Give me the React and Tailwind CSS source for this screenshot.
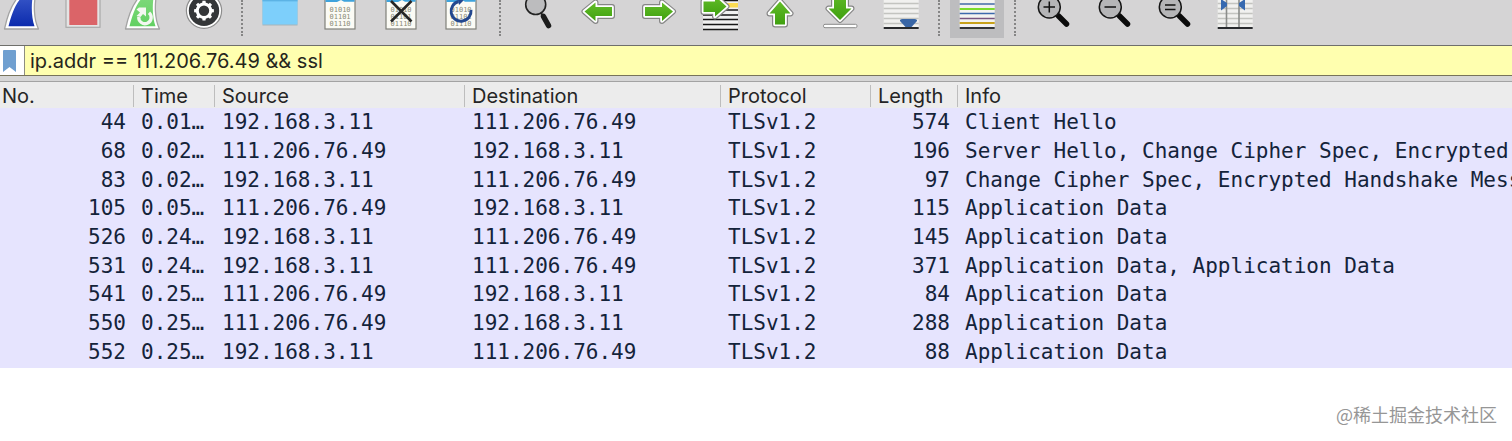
import React from "react";

function Icon({ children }) {
  return (
    <svg viewBox="0 0 54 45" className="h-[45px] w-[54px] shrink-0" aria-hidden="true">
      {children}
    </svg>
  );
}

function Fin({ from, to, id, children }) {
  return (
    <Icon>
      <defs>
        <linearGradient id={id} x1="0" y1="0" x2="0" y2="1">
          <stop offset="0" stopColor={from} />
          <stop offset="1" stopColor={to} />
        </linearGradient>
      </defs>
      <path d="M9.5 29C12 17 17 3 25 -5L41 -8C38.500 4 38.500 19 43.500 29Z" fill="#fff" stroke="#a3a3a3" strokeWidth="1.300" strokeLinejoin="round" />
      <path d="M13.500 26.300C16 16 20 4 27 -3L38 -5C36 5 36.500 18 39.500 26.300Z" fill={`url(#${id})`} />
      {children}
    </Icon>
  );
}

function DataFile({ children }) {
  return (
    <Icon>
      <rect x="12" y="-8" width="30" height="37" fill="#fbfbf5" stroke="#80807a" strokeWidth="1.200" />
      <path d="M12.500 -2H41.500V1.800H31L28 0L24 2H12.500Z" fill="#3fa3dc" />
      <g fill="#8b8b77" fontFamily="'DejaVu Sans Mono', monospace" fontSize="7">
        <text x="16.500" y="11.500">01010</text>
        <text x="16.500" y="18.500">01101</text>
        <text x="16.500" y="25.800">01110</text>
      </g>
      {children}
    </Icon>
  );
}

function GreenArrow({ d }) {
  return (
    <>
      <path d={d} fill="#52b01c" stroke="#858585" strokeWidth="6" strokeLinejoin="round" />
      <path d={d} fill="#52b01c" stroke="#fff" strokeWidth="3.600" strokeLinejoin="round" />
      <path d={d} fill="url(#arrowGreen)" />
    </>
  );
}

function ArrowGradient() {
  return (
    <defs>
      <linearGradient id="arrowGreen" x1="0" y1="0" x2="0" y2="1">
        <stop offset="0" stopColor="#62bd28" />
        <stop offset="1" stopColor="#40a010" />
      </linearGradient>
    </defs>
  );
}

function Magnifier({ sign }) {
  return (
    <Icon>
      <path d="M32.500 16L40.500 24" stroke="#0b0b0b" strokeWidth="5.500" strokeLinecap="round" />
      <circle cx="23.300" cy="7" r="11" fill="#b5b5b7" stroke="#151515" strokeWidth="1.500" />
      <path d={sign} stroke="#111" strokeWidth="1.500" fill="none" />
    </Icon>
  );
}

const teeth = [0, 45, 90, 135, 180, 225, 270, 315];

const groups = [
  [
    { label: "Start capture", icon: <Fin id="finBlue" from="#3857c8" to="#0c2bad" /> },
    {
      label: "Stop capture",
      icon: (
        <Icon>
          <rect x="10" y="-8" width="34" height="35.300" fill="#e4e4e4" stroke="#a9a9a9" strokeWidth="1.200" />
          <rect x="13.300" y="-8" width="28" height="33" fill="#db6468" />
        </Icon>
      ),
    },
    {
      label: "Restart capture",
      icon: (
        <Fin id="finGreen" from="#7fd97c" to="#62d062">
          <path d="M33 12.800A6.200 6.200 0 1 1 22.800 17" fill="none" stroke="#f3f7f0" strokeWidth="3.300" />
          <path d="M20.500 9.500L23 7.500H30V16.500L27 14L24.500 17L20.500 16L24 12.500Z" fill="#f3f7f0" />
        </Fin>
      ),
    },
    {
      label: "Capture options",
      icon: (
        <Icon>
          <circle cx="27" cy="10.700" r="17.600" fill="#fff" stroke="#8d8d8d" strokeWidth="1.200" />
          <circle cx="27" cy="10.700" r="15.200" fill="#343638" />
          <circle cx="27" cy="10.700" r="6.700" fill="none" stroke="#fff" strokeWidth="3" />
          {teeth.map((a) => (
            <path key={a} d="M25 4.500L25.500 0.800H28.500L29 4.500Z" fill="#fff" transform={`rotate(${a} 27 10.700)`} />
          ))}
        </Icon>
      ),
    },
  ],
  [
    {
      label: "Open file",
      icon: (
        <Icon>
          <rect x="9.500" y="0" width="35" height="25.500" fill="#a8b4ba" />
          <rect x="9.500" y="0" width="35" height="24.500" fill="#7dcffb" />
          <rect x="9.500" y="-2" width="35" height="3.400" fill="#5cb3e5" />
        </Icon>
      ),
    },
    { label: "Save file", icon: <DataFile /> },
    {
      label: "Close file",
      icon: (
        <DataFile>
          <path d="M17 1L37.500 21.500M37.500 1L17 21.500" stroke="#262626" strokeWidth="2.600" />
        </DataFile>
      ),
    },
    {
      label: "Reload file",
      icon: (
        <DataFile>
          <path d="M37 10A10 10 0 1 1 24.500 1.500" fill="none" stroke="#23488f" strokeWidth="2.900" />
          <path d="M23.500 -3L29.500 0.500L25 5Z" fill="#23488f" />
        </DataFile>
      ),
    },
  ],
  [
    {
      label: "Find packet",
      icon: (
        <Icon>
          <path d="M30 13L33 17" stroke="#222" strokeWidth="2" />
          <path d="M32.500 16.500L37.500 25.500" stroke="#1c1c1c" strokeWidth="5.500" strokeLinecap="round" />
          <circle cx="24.700" cy="4.500" r="10" fill="#bcbcbe" stroke="#222" strokeWidth="1.600" />
        </Icon>
      ),
    },
    {
      label: "Previous packet",
      icon: (
        <Icon>
          <ArrowGradient />
          <GreenArrow d="M13.500 11.500L24.500 2.500V7H41V16H24.500V21Z" />
        </Icon>
      ),
    },
    {
      label: "Next packet",
      icon: (
        <Icon>
          <GreenArrow d="M41 11.500L30 2.500V7H13V16H30V21Z" />
        </Icon>
      ),
    },
    {
      label: "Go to packet",
      icon: (
        <Icon>
          <rect x="11" y="-4" width="35" height="34" fill="#f1f1f1" />
          <rect x="34" y="3" width="12" height="4.500" fill="#fbdc52" />
          <path d="M11 0.500H46M11 10H46M11 15H46M11 19.500H46M11 24.500H46M11 29.500H46" stroke="#171717" strokeWidth="1.600" />
          <GreenArrow d="M34.500 6.500L23 -4V1.500H11.500V12H23V16.500Z" />
        </Icon>
      ),
    },
    {
      label: "First packet",
      icon: (
        <Icon>
          <GreenArrow d="M27 1.500L37.500 13.500H32V24.500H22V13.500H16.500Z" />
        </Icon>
      ),
    },
    {
      label: "Last packet",
      icon: (
        <Icon>
          <rect x="10.500" y="24.300" width="33.500" height="3.400" rx="1.500" fill="#fff" stroke="#8a8a8a" strokeWidth="1" />
          <GreenArrow d="M27 20L15.500 8.500H21V-8H33V8.500H38.500Z" />
        </Icon>
      ),
    },
    {
      label: "Auto scroll",
      icon: (
        <Icon>
          <rect x="9.700" y="-4" width="35" height="33" fill="#f1f1ef" />
          <path d="M9.700 3.500H44.700M9.700 8.500H44.700M9.700 13.500H44.700M9.700 18.500H44.700M9.700 23.500H44.700" stroke="#c3c4c0" strokeWidth="1.500" />
          <path d="M9.700 28H44.700" stroke="#292b2e" strokeWidth="2" />
          <path d="M26 20Q27 19 28.500 19H40.500Q42 19 43 20V21L37.500 27H31.500L26 21Z" fill="#3966a6" />
        </Icon>
      ),
    },
  ],
  [
    {
      label: "Colorize packets",
      active: true,
      icon: (
        <Icon>
          <rect x="9.700" y="-4" width="35" height="33" fill="#f3f3f1" />
          <path d="M9.700 4H44.700" stroke="#426aa7" strokeWidth="1.600" />
          <path d="M9.700 9H44.700" stroke="#7bdc2c" strokeWidth="1.800" />
          <path d="M9.700 13.500H44.700" stroke="#3c69ad" strokeWidth="1.600" />
          <path d="M9.700 18.500H44.700" stroke="#775480" strokeWidth="1.600" />
          <path d="M9.700 23H44.700" stroke="#c8a21a" strokeWidth="1.800" />
          <path d="M9.700 28H44.700" stroke="#323538" strokeWidth="2" />
        </Icon>
      ),
    },
  ],
  [
    { label: "Zoom in", icon: <Magnifier sign="M17.500 7H29M23.300 1.500V12.500" /> },
    { label: "Zoom out", icon: <Magnifier sign="M17.500 7H29" /> },
    { label: "Normal size", icon: <Magnifier sign="M18 5H28.500M18 9.500H28.500" /> },
    {
      label: "Resize columns",
      icon: (
        <Icon>
          <rect x="9.700" y="-4" width="35" height="33" fill="#f1f1ef" />
          <path d="M9.700 3.500H44.700M9.700 8.500H44.700M9.700 13.500H44.700M9.700 18.500H44.700M9.700 23.500H44.700" stroke="#c3c4c0" strokeWidth="1.400" />
          <path d="M9.700 28H44.700" stroke="#292b2e" strokeWidth="2" />
          <path d="M18.500 0V27M31 0V27" stroke="#8b8d8a" strokeWidth="1.600" />
          <path d="M13 -1L19 3V6L13 10.500ZM37 -1L31 3V6L37 10.500Z" fill="#3669b0" />
        </Icon>
      ),
    },
  ],
];

const columns = [
  { name: "No.", width: "w-[134px]", pad: "pl-[2px]" },
  { name: "Time", width: "w-[81px]", pad: "pl-[7px]" },
  { name: "Source", width: "w-[250px]", pad: "pl-[7px]" },
  { name: "Destination", width: "w-[256px]", pad: "pl-[7px]" },
  { name: "Protocol", width: "w-[150px]", pad: "pl-[7px]" },
  { name: "Length", width: "w-[87px]", pad: "pl-[7px]" },
  { name: "Info", width: "", pad: "pl-[7px]" },
];

const client = "192.168.3.11";
const server = "111.206.76.49";

const packets = [
  [44, "0.01…", client, server, 574, "Client Hello"],
  [68, "0.02…", server, client, 196, "Server Hello, Change Cipher Spec, Encrypted"],
  [83, "0.02…", client, server, 97, "Change Cipher Spec, Encrypted Handshake Mess"],
  [105, "0.05…", server, client, 115, "Application Data"],
  [526, "0.24…", client, server, 145, "Application Data"],
  [531, "0.24…", client, server, 371, "Application Data, Application Data"],
  [541, "0.25…", server, client, 84, "Application Data"],
  [550, "0.25…", server, client, 288, "Application Data"],
  [552, "0.25…", client, server, 88, "Application Data"],
];

function Toolbar() {
  return (
    <div className="overflow-hidden border-b border-[#6f6f6b] bg-[#d5d4d5]">
      <div className="-ml-2 flex w-[1273px]" role="toolbar" aria-label="Main toolbar">
        {groups.map((group, g) => (
          <React.Fragment key={g}>
            {g > 0 && (
              <div className="flex w-4 justify-center">
                <div className="h-9 border-l-2 border-dotted border-[#858585]" />
              </div>
            )}
            {group.map((item) => (
              <button key={item.label} type="button" aria-label={item.label} className="flex h-[45px] flex-1 items-start justify-center">
                <span className={item.active ? "block h-[38px] overflow-hidden bg-[#bdbdbf]" : "block"}>{item.icon}</span>
              </button>
            ))}
          </React.Fragment>
        ))}
      </div>
    </div>
  );
}

function FilterBar() {
  return (
    <div className="flex h-[30px] border-b border-[#77735a] bg-[#ffffaf]">
      <button type="button" aria-label="Filter bookmarks" className="flex w-[25px] shrink-0 items-center border-r border-[#8d8d80] bg-white pl-[3px]">
        <svg viewBox="0 0 13 22" className="h-[22px] w-[13px]" aria-hidden="true">
          <path d="M0 1Q0 0 1 0H12Q13 0 13 1V22L6.500 17L0 22Z" fill="#6f9fd0" />
        </svg>
      </button>
      <input
        type="text"
        aria-label="Display filter"
        defaultValue="ip.addr == 111.206.76.49 && ssl"
        className="min-w-0 flex-1 bg-transparent pl-[5px] font-['Inter',sans-serif] text-[20px] leading-[28px] text-[#26261c] outline-none"
      />
    </div>
  );
}

function PacketTable() {
  return (
    <div className="overflow-hidden bg-[#e6e4fe] pb-[2px]">
      <table className="h-[284px] w-full table-fixed border-collapse">
        <thead className="bg-[#ececec] font-['Inter',sans-serif] text-[20px] leading-[22px] text-[#252525]">
          <tr className="h-[26px]">
            {columns.map((c) => (
              <th key={c.name} scope="col" className={`${c.width} p-0 pt-[2px] text-left font-normal`}>
                <div className={`${c.pad} h-[22px] ${c.name === "Info" ? "" : "border-r border-[#bdbdbd]"}`}>{c.name}</div>
              </th>
            ))}
          </tr>
        </thead>
        <tbody className="font-['DejaVu_Sans_Mono',monospace] text-[21px] leading-[26px] whitespace-nowrap text-[#14233a]">
          {packets.map(([no, time, src, dst, length, info]) => (
            <tr key={no}>
              <td className="p-0 pr-2 text-right">{no}</td>
              <td className="p-0 pl-[7px]">{time}</td>
              <td className="p-0 pl-[7px]">{src}</td>
              <td className="p-0 pl-[7px]">{dst}</td>
              <td className="p-0 pl-[7px]">TLSv1.2</td>
              <td className="p-0 pr-2 text-right">{length}</td>
              <td className="overflow-hidden p-0 pl-[7px]">{info}</td>
            </tr>
          ))}
        </tbody>
      </table>
    </div>
  );
}

export default function App() {
  return (
    <main className="overflow-hidden bg-white">
      <Toolbar />
      <FilterBar />
      <div className="h-[6px] border-b border-[#a3a3a3] bg-[#d6d6d6]" />
      <PacketTable />
      <p className="pt-[33px] pr-[15px] text-right font-['Noto_Sans_CJK_SC',sans-serif] text-[18px] leading-[26px] text-[#969696]">
        @稀土掘金技术社区
      </p>
    </main>
  );
}
